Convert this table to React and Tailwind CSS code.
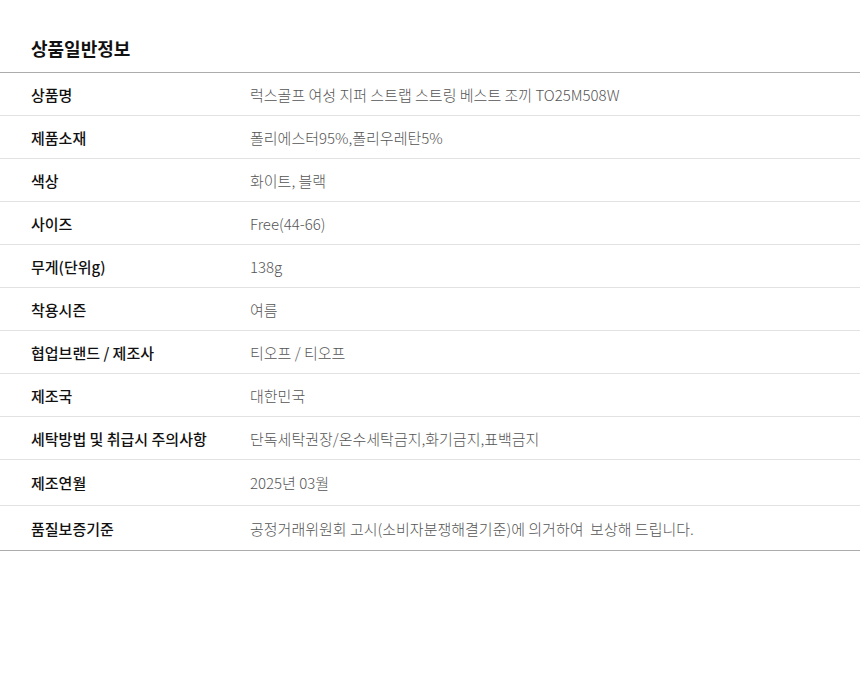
export default function App() {
  const rows = [
    ["상품명", "럭스골프 여성 지퍼 스트랩 스트링 베스트 조끼 TO25M508W", "h-[43px]"],
    ["제품소재", "폴리에스터95%,폴리우레탄5%", "h-[43px]"],
    ["색상", "화이트, 블랙", "h-[43px]"],
    ["사이즈", "Free(44-66)", "h-[43px]"],
    ["무게(단위g)", "138g", "h-[43px]"],
    ["착용시즌", "여름", "h-[43px]"],
    ["협업브랜드 / 제조사", "티오프 / 티오프", "h-[43px]"],
    ["제조국", "대한민국", "h-[43px]"],
    ["세탁방법 및 취급시 주의사항", "단독세탁권장/온수세탁금지,화기금지,표백금지", "h-[43px]"],
    ["제조연월", "2025년 03월", "h-[46px]"],
    ["품질보증기준", "공정거래위원회 고시(소비자분쟁해결기준)에 의거하여  보상해 드립니다.", "h-[44px]"],
  ];
  return (
    <div
      className="w-[860px] h-[700px] bg-white"
      style={{ fontFamily: '"Noto Sans CJK KR", "Noto Sans", sans-serif' }}
    >
      <div className="h-[72px] pl-[31px] flex items-end pb-[15px]">
        <h2 className="text-[18px] font-bold text-[#111] leading-none">상품일반정보</h2>
      </div>
      <div className="border-t border-b border-[#acacac]">
        {rows.map(([k, v, h], i) => (
          <div
            key={i}
            className={`flex items-center ${h} ${i < rows.length - 1 ? "border-b border-[#e2e2e2]" : ""}`}
          >
            <div className="w-[250px] pl-[31px] text-[15px] font-medium text-[#111] leading-none">{k}</div>
            <div className="text-[15px] font-light text-[#555] leading-none whitespace-pre">{v}</div>
          </div>
        ))}
      </div>
    </div>
  );
}
